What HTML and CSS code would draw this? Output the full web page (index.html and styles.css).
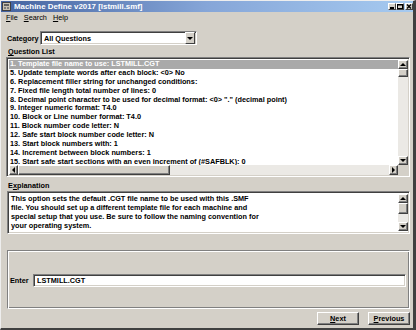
FILE: index.html
```html
<!DOCTYPE html>
<html lang="en">
<head>
    <meta charset="UTF-8">
    <title>Machine Define v2017 [lstmill.smf]</title>
    <link rel="stylesheet" href="styles.css">
</head>
<body>
<div class="window">
    <div class="titlebar">
        <svg class="app-icon" width="9" height="9" viewBox="0 0 9 9">
            <rect x="0.5" y="0.5" width="8" height="8" fill="#c8c0b0" stroke="#404040"/>
            <rect x="2" y="2" width="5" height="2" fill="#606060"/>
            <rect x="2" y="5" width="2" height="2" fill="#808080"/>
            <rect x="5" y="5" width="2" height="2" fill="#808080"/>
        </svg>
        <span class="title">Machine Define v2017 [lstmill.smf]</span>
        <div class="caption">
            <span class="cbtn"><svg width="8" height="7" viewBox="0 0 8 7"><rect x="2" y="4" width="4" height="2" fill="#000"/></svg></span>
            <span class="cbtn"><svg width="8" height="7" viewBox="0 0 8 7"><rect x="1.5" y="1.5" width="5" height="4" fill="none" stroke="#000"/><rect x="1" y="1" width="6" height="1.5" fill="#000"/></svg></span>
            <span class="cbtn gap"><svg width="8" height="7" viewBox="0 0 8 7"><path d="M2 1.5 L6 5.5 M6 1.5 L2 5.5" stroke="#000" stroke-width="1.3"/></svg></span>
        </div>
    </div>
    <div class="menubar">
        <span><u>F</u>ile</span>
        <span><u>S</u>earch</span>
        <span><u>H</u>elp</span>
    </div>
    <div class="content">
        <div class="category-row">
            <label>Cate<u>g</u>ory</label>
            <div class="combo">
                <span class="combo-text">All Questions</span>
                <span class="drop-btn"><span class="arrow-down"></span></span>
            </div>
        </div>

        <div class="section-label"><u>Q</u>uestion List</div>
        <div class="listbox sunken">
            <div class="rows">
                <div class="row selected">1. Template file name to use: LSTMILL.CGT</div>
                <div class="row">5. Update template words after each block: &lt;0&gt; No</div>
                <div class="row">6. Replacement filler string for unchanged conditions:</div>
                <div class="row">7. Fixed file length total number of lines: 0</div>
                <div class="row">8. Decimal point character to be used for decimal format: &lt;0&gt; "." (decimal point)</div>
                <div class="row">9. Integer numeric format: T4.0</div>
                <div class="row">10. Block or Line number format: T4.0</div>
                <div class="row">11. Block number code letter: N</div>
                <div class="row">12. Safe start block number code letter: N</div>
                <div class="row">13. Start block numbers with: 1</div>
                <div class="row">14. Increment between block numbers: 1</div>
                <div class="row">15. Start safe start sections with an even increment of (#SAFBLK): 0</div>
            </div>
            <div class="vscroll">
                <span class="sbtn"><span class="arrow-up"></span></span>
                <span class="thumb small"></span>
                <span class="track"></span>
                <span class="sbtn"><span class="arrow-down"></span></span>
            </div>
            <div class="hscroll">
                <span class="sbtn"><span class="arrow-left"></span></span>
                <span class="thumb wide"></span>
                <span class="track"></span>
                <span class="sbtn"><span class="arrow-right"></span></span>
            </div>
            <div class="corner"></div>
        </div>

        <div class="section-label tall">E<u>x</u>planation</div>
        <div class="explain sunken">
            <div class="explain-text">
                This option sets the default .CGT file name to be used with this .SMF<br>
                file. You should set up a different template file for each machine and<br>
                special setup that you use. Be sure to follow the naming convention for<br>
                your operating system.
            </div>
            <div class="vscroll">
                <span class="sbtn"><span class="arrow-up"></span></span>
                <span class="thumb mid"></span>
                <span class="track"></span>
                <span class="sbtn"><span class="arrow-down"></span></span>
            </div>
        </div>

        <div class="group">
            <div class="enter-row">
                <label>Enter</label>
                <div class="field sunken">LSTMILL.CGT</div>
            </div>
        </div>

        <div class="buttons">
            <span class="btn"><u>N</u>ext</span>
            <span class="btn"><u>P</u>revious</span>
        </div>
    </div>
</div>
</body>
</html>
```

FILE: styles.css
```css
*{
    margin:0;
    padding:0;
    box-sizing:border-box;
}
body{
    background:#d4d0c8;
    font-family:"Liberation Sans",Arial,sans-serif;
    font-size:7.3px;
    font-weight:bold;
    color:#000;
}
.window{
    width:416px;
    height:330px;
    background:#d4d0c8;
    border-top:1px solid #eeeeee;
    border-left:1px solid #eeeeee;
    border-right:3px solid #404040;
    border-bottom:2px solid #404040;
    display:flex;
    flex-direction:column;
}
/* title bar */
.titlebar{
    height:11px;
    display:flex;
    align-items:center;
    padding-left:1px;
    background:linear-gradient(to right,#4463a0,#86a6d8 50%,#a6caf0);
    color:#fff;
}
.app-icon{
    margin-right:3px;
}
.title{
    flex:1;
    font-size:7.9px;
    line-height:11px;
}
.caption{
    display:flex;
}
.cbtn{
    width:8px;
    height:7px;
    background:#d4d0c8;
    border-top:1px solid #fff;
    border-left:1px solid #fff;
    border-right:1px solid #404040;
    border-bottom:1px solid #404040;
    display:flex;
    align-items:center;
    justify-content:center;
    overflow:hidden;
}
.cbtn svg{
    flex:none;
}
.cbtn.gap{
    margin-left:1px;
}
/* menu */
.menubar{
    height:11px;
    display:flex;
    gap:6px;
    padding-left:5px;
    align-items:center;
    font-weight:normal;
    font-size:7.3px;
}
.content{
    padding:0 3px 0 4px;
    display:flex;
    flex-direction:column;
}
/* category */
.category-row{
    margin-top:8px;
    height:14px;
    display:flex;
    align-items:center;
}
.category-row label{
    width:35px;
    padding-left:2px;
}
.combo{
    width:157px;
    height:14px;
    background:#fff;
    border:1px solid;
    border-color:#808080 #fff #fff #808080;
    box-shadow:inset 1px 1px #404040, inset -1px -1px #d4d0c8;
    display:flex;
    align-items:center;
    padding:0 1px 0 3px;
}
.combo-text{
    flex:1;
}
.drop-btn{
    width:10px;
    height:12px;
    background:#d4d0c8;
    border:1px solid;
    border-color:#fff #404040 #404040 #fff;
    display:flex;
    align-items:center;
    justify-content:center;
}
/* arrows */
.arrow-down,.arrow-up,.arrow-left,.arrow-right{
    width:0;
    height:0;
    border:3px solid transparent;
}
.arrow-down{ border-top-color:#000; border-bottom-width:0; }
.arrow-up{ border-bottom-color:#000; border-top-width:0; }
.arrow-left{ border-right-color:#000; border-left-width:0; }
.arrow-right{ border-left-color:#000; border-right-width:0; }

.section-label{
    height:12px;
    display:flex;
    align-items:flex-end;
    padding:0 0 1px 3px;
    line-height:9px;
}
.section-label.tall{
    height:14px;
}
.sunken{
    border:1px solid;
    border-color:#808080 #fff #fff #808080;
    box-shadow:inset 1px 1px #404040, inset -1px -1px #d4d0c8;
}
/* list */
.listbox{
    height:120px;
    margin-left:1px;
    background:#fff;
    padding:2px 1px 1px 2px;
    display:grid;
    grid-template-columns:1fr 10px;
    grid-template-rows:1fr 10px;
}
.rows{
    overflow:hidden;
    white-space:nowrap;
}
.row{
    height:8.9px;
    line-height:8.9px;
    padding-left:1px;
}
.row.selected{
    background:#a9a9a9;
    color:#fff;
}
.vscroll{
    display:flex;
    flex-direction:column;
    background:#ebe9e5;
}
.hscroll{
    display:flex;
    background:#ebe9e5;
}
.corner{
    background:#d4d0c8;
}
.sbtn,.thumb{
    background:#d4d0c8;
    border:1px solid;
    border-color:#fff #404040 #404040 #fff;
    box-shadow:inset -1px -1px #808080;
}
.sbtn{
    flex:none;
    width:10px;
    height:9px;
    display:flex;
    align-items:center;
    justify-content:center;
}
.hscroll .sbtn{
    width:9px;
    height:10px;
}
.track{
    flex:1;
}
.thumb.small{
    height:8px;
}
.thumb.mid{
    height:11px;
}
.thumb.wide{
    width:152px;
}
/* explanation */
.explain{
    height:43px;
    margin-left:2px;
    background:#fff;
    padding:2px 1px 2px 2px;
    display:flex;
}
.explain-text{
    flex:1;
    line-height:9px;
    padding-left:1px;
    white-space:nowrap;
    overflow:hidden;
}
.explain .vscroll{
    width:10px;
}
/* enter */
.group{
    margin:16px 0 0 2px;
    height:59px;
    border:1px solid;
    border-color:#808080 #fff #fff #808080;
    box-shadow:inset 1px 1px #fff, inset -1px -1px #808080;
    padding:23px 3px 0 1px;
}
.enter-row{
    display:flex;
    align-items:center;
}
.enter-row label{
    width:24px;
    padding-left:1px;
}
.field{
    flex:1;
    height:13px;
    background:#fff;
    padding:0 3px;
    line-height:11px;
}
.buttons{
    margin-top:3px;
    display:flex;
    justify-content:flex-end;
    gap:9px;
}
.btn{
    width:42px;
    height:13px;
    border:1px solid;
    border-color:#fff #404040 #404040 #fff;
    box-shadow:inset -1px -1px #808080;
    display:flex;
    align-items:center;
    justify-content:center;
}
```
